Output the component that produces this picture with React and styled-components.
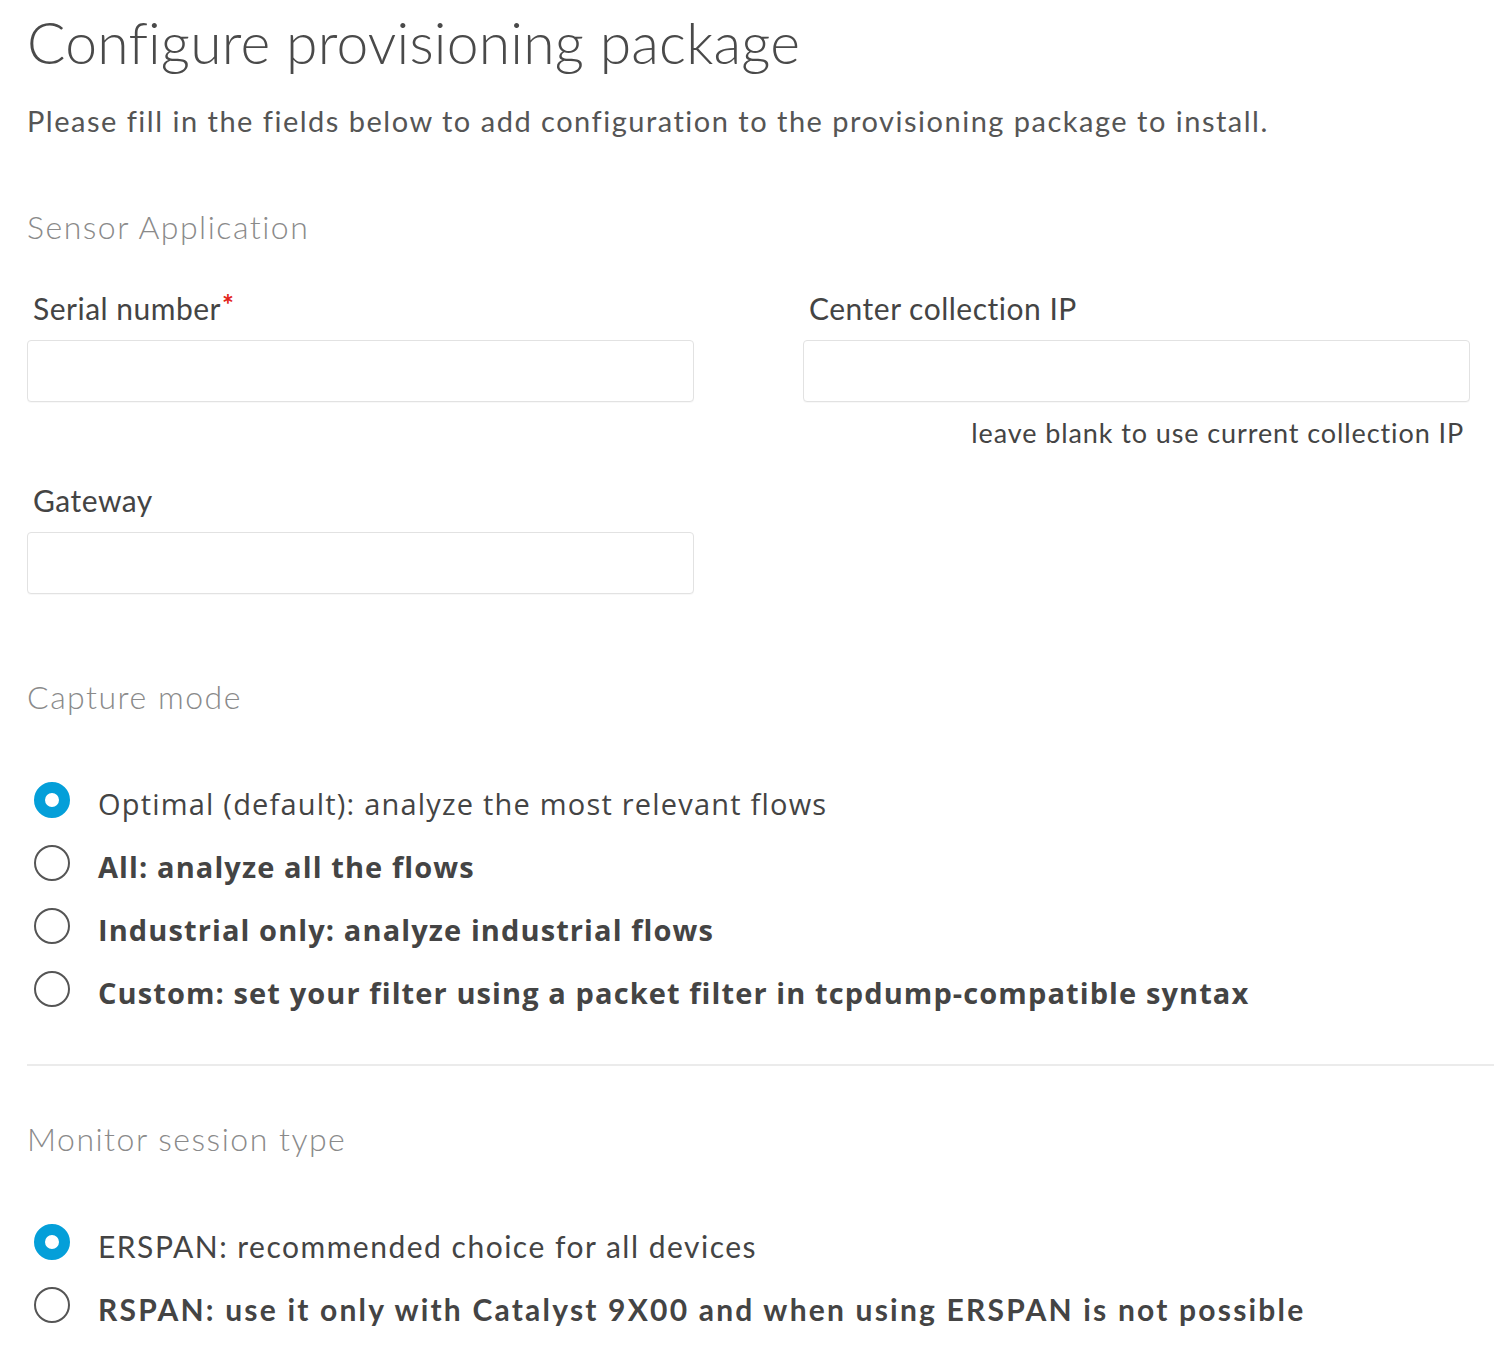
import React from "react";
import styled, { createGlobalStyle } from "styled-components";

const Global = createGlobalStyle`
  html, body { margin: 0; padding: 0; background: #fff; }
  body { font-family: Lato, "Open Sans", sans-serif; color: #444; }
`;

const Page = styled.div`
  padding: 10px 24px 20px 27px;
  width: 1494px;
  box-sizing: border-box;
`;

const Title = styled.h1`
  margin: 0;
  font-family: Lato, sans-serif;
  font-weight: 300;
  font-size: 57px;
  line-height: 64px;
  color: #4a4a4a;
  letter-spacing: 0.2px;
`;

const Intro = styled.p`
  margin: 29px 0 0;
  font-family: Lato, sans-serif;
  font-weight: 400;
  font-size: 29px;
  line-height: 36px;
  color: #555;
  letter-spacing: 1.5px;
`;

const SectionTitle = styled.h2`
  margin: ${(p) => p.$top}px 0 0;
  font-family: Lato, sans-serif;
  font-weight: 300;
  font-size: 32px;
  line-height: 40px;
  color: #8a8a8a;
  letter-spacing: 1.5px;
`;

const FieldGrid = styled.div`
  display: grid;
  grid-template-columns: 667px 667px;
  column-gap: 109px;
  margin-top: 43px;
`;

const Field = styled.div`
  display: flex;
  flex-direction: column;
  margin-top: ${(p) => p.$top || 0}px;
`;

const Label = styled.label`
  font-family: Lato, sans-serif;
  font-size: 30px;
  line-height: 36px;
  color: #444;
  padding-left: 6px;
  margin-bottom: 14px;
  letter-spacing: 0.5px;
`;

const Req = styled.span`
  color: #e2231a;
  font-size: 28px;
  font-weight: 700;
  vertical-align: top;
  line-height: 28px;
  margin-left: 1px;
`;

const Input = styled.input`
  height: 62px;
  box-sizing: border-box;
  border: 1.5px solid #e2e2e2;
  border-radius: 4px;
  background: #fff;
  outline: none;
  box-shadow: 0 1px 1px rgba(0, 0, 0, 0.03);
`;

const Help = styled.div`
  text-align: right;
  font-family: Lato, sans-serif;
  font-size: 27px;
  line-height: 34px;
  color: #444;
  margin-top: 14px;
  padding-right: 6px;
  letter-spacing: 0.9px;
`;

const RadioList = styled.div`
  display: flex;
  flex-direction: column;
  margin-top: ${(p) => p.$top}px;
  gap: 23px;
`;

const RadioRow = styled.label`
  display: flex;
  align-items: flex-start;
  gap: 28px;
  padding-left: 7px;
`;

const Circle = styled.span`
  width: 36px;
  height: 36px;
  box-sizing: border-box;
  border-radius: 50%;
  flex: none;
  ${(p) =>
    p.$checked
      ? `border: 11.5px solid #049fd9; background: #fff;`
      : `border: 2.5px solid #555; background: #fff;`}
`;

const OptionText = styled.span`
  font-family: ${(p) => (p.$lato ? "Lato, sans-serif" : "'Open Sans', sans-serif")};
  font-weight: ${(p) => (p.$bold ? 700 : 400)};
  font-size: ${(p) => (p.$lato ? 30 : 29)}px;
  color: #444;
  line-height: 36px;
  padding-top: 4px;
  letter-spacing: ${(p) =>
    p.$lato ? (p.$bold ? 2.2 : 1.5) : p.$bold ? 1.1 : 1.2}px;
`;

const Divider = styled.hr`
  border: none;
  border-top: 2px solid #ebebeb;
  margin: 53px -24px 0 0;
`;

const Radio = ({ checked, bold, lato, children }) => (
  <RadioRow>
    <Circle $checked={checked} />
    <OptionText $bold={bold} $lato={lato}>
      {children}
    </OptionText>
  </RadioRow>
);

export default function App() {
  return (
    <Page>
      <Global />
      <Title>Configure provisioning package</Title>
      <Intro>Please fill in the fields below to add configuration to the provisioning package to install.</Intro>
      <SectionTitle $top={68}>Sensor Application</SectionTitle>
      <FieldGrid>
        <Field>
          <Label>
            Serial number<Req>*</Req>
          </Label>
          <Input />
        </Field>
        <Field>
          <Label>Center collection IP</Label>
          <Input />
          <Help>leave blank to use current collection IP</Help>
        </Field>
        <Field $top={32}>
          <Label>Gateway</Label>
          <Input />
        </Field>
      </FieldGrid>
      <SectionTitle $top={83}>Capture mode</SectionTitle>
      <RadioList $top={65}>
        <Radio checked>Optimal (default): analyze the most relevant flows</Radio>
        <Radio bold>All: analyze all the flows</Radio>
        <Radio bold>Industrial only: analyze industrial flows</Radio>
        <Radio bold>Custom: set your filter using a packet filter in tcpdump-compatible syntax</Radio>
      </RadioList>
      <Divider />
      <SectionTitle $top={53}>Monitor session type</SectionTitle>
      <RadioList $top={65}>
        <Radio checked lato>ERSPAN: recommended choice for all devices</Radio>
        <Radio bold lato>RSPAN: use it only with Catalyst 9X00 and when using ERSPAN is not possible</Radio>
      </RadioList>
    </Page>
  );
}
